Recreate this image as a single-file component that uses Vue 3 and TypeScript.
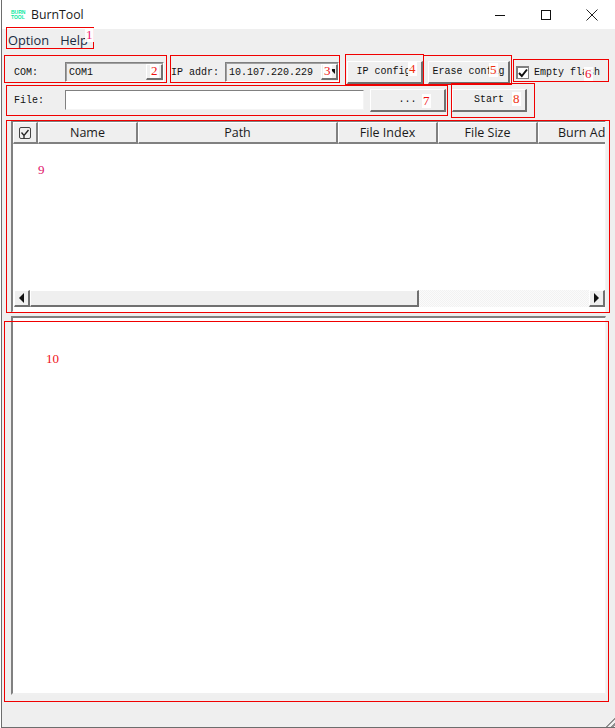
<script setup lang="ts">
interface Box { id: number; x: number; y: number; w: number; h: number }
interface Tag { text: string; x: number; y: number; color: string }
const columns = [
  { label: 'Name', w: 100 },
  { label: 'Path', w: 200 },
  { label: 'File Index', w: 100 },
  { label: 'File Size', w: 100 },
  { label: 'Burn Address', w: 120 },
]
const boxes: Box[] = [
  { id: 1, x: 6, y: 27, w: 88, h: 22 },
  { id: 2, x: 4, y: 55, w: 163, h: 28 },
  { id: 3, x: 170, y: 55, w: 170, h: 28 },
  { id: 4, x: 345, y: 54, w: 79, h: 31 },
  { id: 5, x: 423, y: 55, w: 89, h: 30 },
  { id: 6, x: 513, y: 59, w: 96, h: 23 },
  { id: 7, x: 6, y: 85, w: 442, h: 31 },
  { id: 8, x: 451, y: 83, w: 84, h: 35 },
  { id: 9, x: 6, y: 120, w: 604, h: 193 },
  { id: 10, x: 4, y: 321, w: 605, h: 381 },
]
const tags: Tag[] = [
  { text: '1', x: 85, y: 28, color: '#f0186a' },
  { text: '2', x: 150, y: 64, color: '#f01010' },
  { text: '3', x: 323, y: 64, color: '#f01010' },
  { text: '4', x: 408, y: 62, color: '#f03010' },
  { text: '5', x: 489, y: 63, color: '#f03010' },
  { text: '6', x: 584, y: 67, color: '#f01030' },
  { text: '7', x: 422, y: 94, color: '#f01010' },
  { text: '8', x: 512, y: 92, color: '#f03010' },
  { text: '9', x: 37, y: 163, color: '#e0106a' },
  { text: '10', x: 45, y: 352, color: '#f01020' },
]
</script>

<template>
  <div class="window">
    <header class="titlebar">
      <div class="logo"><span>BURN</span><span>TOOL</span></div>
      <span class="title">BurnTool</span>
      <div class="controls">
        <svg width="16" height="16" viewBox="0 0 16 16"><path d="M3 8.500h10" stroke="#111" fill="none" /></svg>
        <svg width="16" height="16" viewBox="0 0 16 16"><rect x="3.500" y="3.500" width="9" height="9" stroke="#111" fill="none" /></svg>
        <svg width="16" height="16" viewBox="0 0 16 16"><path d="M2.500 2.500l11 11M13.500 2.500l-11 11" stroke="#222" fill="none" /></svg>
      </div>
    </header>

    <nav class="menubar"><span>Option</span><span>Help</span></nav>

    <section class="row row-one">
      <label class="label com-label">COM:</label>
      <div class="combo com-combo">
        <span>COM1</span>
        <i class="combo-btn"></i>
      </div>
      <label class="label ip-label">IP addr:</label>
      <div class="combo ip-combo">
        <span>10.107.220.229</span>
        <i class="combo-btn"><b class="caret"></b></i>
      </div>
      <button class="btn ip-btn">IP config</button>
      <button class="btn erase-btn">Erase config</button>
      <span class="check-box">
        <svg width="10" height="10" viewBox="0 0 10 10"><path d="M1 5l2.800 3L9 1.500" stroke="#111" stroke-width="2" fill="none" /></svg>
      </span>
      <span class="label check-label">Empty flash</span>
    </section>

    <section class="row row-two">
      <label class="label com-label">File:</label>
      <div class="file-input"></div>
      <button class="btn dots-btn">...</button>
      <button class="btn start-btn">Start</button>
    </section>

    <section class="list list-top">
      <div class="head">
        <div class="head-cell head-check">
          <svg width="14" height="14" viewBox="0 0 14 14">
            <rect x="1.500" y="1.500" width="11" height="11" rx="1.500" fill="none" stroke="#444" />
            <path d="M3.500 6.500l2.500 3 4.500-5.500M6 10v2.500" fill="none" stroke="#222" stroke-width="1.300" />
          </svg>
        </div>
        <div v-for="c in columns" :key="c.label" class="head-cell" :style="{ width: c.w + 'px' }">{{ c.label }}</div>
      </div>
      <div class="list-body"></div>
      <div class="hscroll">
        <div class="sb-btn"><b class="arrow left"></b></div>
        <div class="sb-thumb"></div>
        <div class="sb-track"></div>
        <div class="sb-btn"><b class="arrow right"></b></div>
      </div>
    </section>

    <section class="list list-bottom"></section>
    <footer class="status"><i class="grip"></i></footer>

    <div v-for="b in boxes" :key="b.id" class="note-box"
      :style="{ left: b.x + 'px', top: b.y + 'px', width: b.w + 'px', height: b.h + 'px' }"></div>
    <span v-for="t in tags" :key="t.text" class="tag"
      :style="{ left: t.x + 'px', top: t.y + 'px', color: t.color }">{{ t.text }}</span>
  </div>
</template>

<style>
html, body { margin: 0; background: #fff; overflow: hidden; }
</style>

<style scoped>
.window {
  position: relative;
  width: 614px;
  height: 728px;
  margin-left: 1px;
  box-sizing: border-box;
  border-left: 1px solid #6d6d6d;
  border-bottom: 1px solid #6d6d6d;
  display: flex;
  flex-direction: column;
  background: #efefef;
  overflow: hidden;
  font-family: "Liberation Mono", monospace;
  color: #111;
}
.titlebar {
  height: 29px;
  flex: none;
  background: #fff;
  display: flex;
  align-items: center;
  padding-left: 9px;
  font-family: "Open Sans", sans-serif;
  font-size: 12.300px;
}
.logo {
  width: 15px;
  margin-right: 5px;
  display: flex;
  flex-direction: column;
  font: bold 5px/5px "Liberation Sans", sans-serif;
  color: #0ce8a0;
}
.title { color: #1a1a1a; }
.controls {
  margin-left: auto;
  display: flex;
  gap: 30px;
  padding-right: 15px;
}
.menubar {
  height: 21px;
  flex: none;
  display: flex;
  align-items: center;
  gap: 11px;
  padding-left: 6px;
  font: 12.800px "Open Sans", sans-serif;
  color: #1a2a40;
}
.row {
  display: flex;
  align-items: center;
  flex: none;
  font-size: 10px;
  padding-left: 12px;
}
.row-one { height: 24px; margin-top: 10px; }
.row-two { height: 22px; margin-top: 5px; }
.label { flex: none; white-space: nowrap; }
.com-label { width: 51px; }
.combo {
  height: 20px;
  box-sizing: border-box;
  display: flex;
  align-items: center;
  justify-content: space-between;
  border: 1px solid #fff;
  border-top-color: #808080;
  border-left-color: #808080;
  box-shadow: inset 1px 1px 0 #a0a0a0;
  background: #efefef;
  padding: 0 0 0 3px;
  flex: none;
}
.com-combo { width: 99px; }
.ip-combo { width: 114px; }
.ip-label { width: 54px; margin-left: 7px; }
.combo-btn {
  width: 17px;
  height: 16px;
  box-sizing: border-box;
  background: #efefef;
  border: 1px solid #fff;
  border-right: 2px solid #707070;
  border-bottom: 2px solid #707070;
  display: flex;
  align-items: center;
  justify-content: flex-end;
  padding-right: 1px;
}
.caret {
  width: 0;
  height: 0;
  border-top: 5px solid #111;
  border-left: 5px solid transparent;
}
.btn {
  height: 23px;
  box-sizing: border-box;
  border: 1px solid #fff;
  border-right: 2px solid #707070;
  border-bottom: 2px solid #707070;
  background: #efefef;
  font: 10px "Liberation Mono", monospace;
  color: #111;
  padding: 0;
  flex: none;
}
.ip-btn { width: 76px; margin-left: 8px; padding-right: 2px; }
.erase-btn { width: 82px; margin-left: 5px; }
.check-box {
  width: 13px;
  height: 13px;
  box-sizing: border-box;
  margin-left: 6px;
  background: #fff;
  border: 2px solid #808080;
  border-right-width: 1px;
  border-bottom-width: 1px;
  display: flex;
  align-items: center;
  justify-content: center;
  flex: none;
}
.check-label { margin-left: 5px; }
.file-input {
  width: 299px;
  height: 20px;
  box-sizing: border-box;
  background: #fff;
  border: 1px solid #f4f4f4;
  border-top-color: #808080;
  border-left-color: #808080;
  flex: none;
}
.dots-btn { width: 76px; margin-left: 6px; }
.start-btn { width: 75px; margin-left: 6px; }
.list {
  box-sizing: border-box;
  margin-left: 9px;
  width: 595px;
  flex: none;
  background: #fff;
  border: 2px solid #808080;
  border-right: 1px solid #f4f4f4;
  border-bottom: 2px solid #f0f0f0;
  display: flex;
  flex-direction: column;
}
.list-top { height: 193px; margin-top: 9px; border-bottom-color: #fff; overflow: hidden; }
.list-bottom { height: 379px; margin-top: 3px; }
.head { display: flex; height: 22px; flex: none; overflow: hidden; }
.head-cell {
  box-sizing: border-box;
  flex: none;
  height: 22px;
  background: #efefef;
  border: 1px solid #fff;
  border-right: 2px solid #808080;
  border-bottom: 2px solid #808080;
  font: 12.500px/19px "Open Sans", sans-serif;
  color: #1a1a1a;
  text-align: center;
  white-space: nowrap;
}
.head-check {
  width: 25px;
  display: flex;
  align-items: center;
  justify-content: center;
}
.list-body { flex: 1; background: #fff; }
.hscroll { height: 17px; flex: none; display: flex; padding: 0 0 0 1px; margin-bottom: 4px; background: #fff; }
.sb-btn {
  width: 16px;
  box-sizing: border-box;
  background: #efefef;
  border: 1px solid #fff;
  border-right: 2px solid #707070;
  border-bottom: 2px solid #707070;
  display: flex;
  align-items: center;
  justify-content: center;
  flex: none;
}
.sb-thumb {
  width: 389px;
  box-sizing: border-box;
  background: #efefef;
  border: 1px solid #fff;
  border-right: 2px solid #707070;
  border-bottom: 2px solid #707070;
  flex: none;
}
.sb-track {
  flex: 1;
  background-color: #f8f8f8;
  background-image: repeating-conic-gradient(#f2f2f2 0 25%, #fbfbfb 0 50%);
  background-size: 2px 2px;
}
.arrow { width: 0; height: 0; border-top: 5px solid transparent; border-bottom: 5px solid transparent; }
.arrow.left { border-right: 5px solid #111; }
.arrow.right { border-left: 5px solid #111; }
.status { flex: 1; position: relative; }
.grip {
  position: absolute;
  right: 0;
  bottom: 0;
  width: 12px;
  height: 12px;
  background: repeating-linear-gradient(135deg, #efefef 0 2px, #909090 2px 4px);
  clip-path: polygon(100% 0, 100% 100%, 0 100%);
}
.note-box {
  position: absolute;
  margin-left: -2px;
  box-sizing: border-box;
  border: 1px solid #f00000;
  pointer-events: none;
}
.tag {
  position: absolute;
  margin-left: -2px;
  font: 13px/14px "Liberation Serif", serif;
  background: rgba(255, 255, 255, 0.92);
  padding: 0 1px;
}
</style>
